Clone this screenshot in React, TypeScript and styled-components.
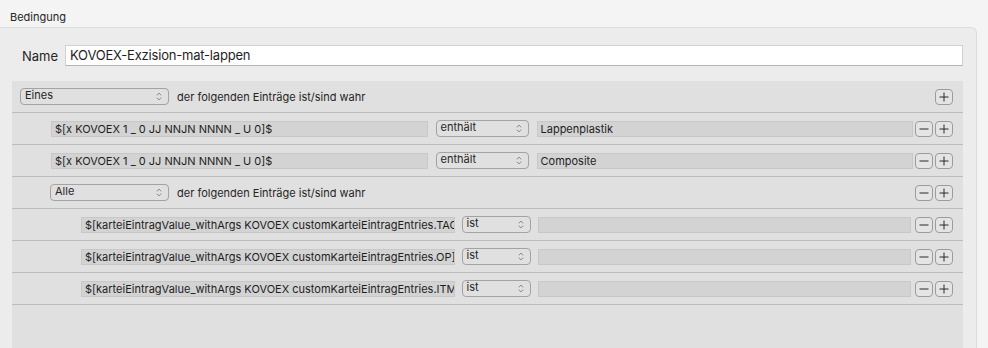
import React from "react";
import styled, { createGlobalStyle } from "styled-components";

const Global = createGlobalStyle`
  html, body {
    margin: 0;
    padding: 0;
    background: #f4f4f4;
    overflow: hidden;
  }
  body {
    font-family: Inter, "Liberation Sans", Arial, sans-serif;
    color: #262626;
    -webkit-font-smoothing: antialiased;
  }
`;

const Page = styled.div`
  width: 988px;
  height: 348px;
  overflow: hidden;
`;

const Title = styled.div`
  padding: 10px 0 0 10px;
  height: 14px;
  font-size: 11px;
  line-height: 14px;
  color: #262626;
`;

const Panel = styled.div`
  margin-top: 3px;
  width: 976px;
  height: 400px;
  background: #ececec;
  border-top: 1px solid #dcdcdc;
  border-right: 1px solid #dcdcdc;
  border-top-right-radius: 6px;
  padding-top: 17px;
`;

const NameRow = styled.div`
  display: flex;
  align-items: center;
  height: 21px;
`;

const NameLabel = styled.label`
  width: 43px;
  padding-left: 22px;
  font-size: 13px;
  color: #262626;
`;

const NameInput = styled.div`
  box-sizing: border-box;
  width: 898px;
  height: 21px;
  background: #ffffff;
  border: 1px solid #d0d0d0;
  border-bottom-color: #b4b4b4;
  font-size: 13px;
  letter-spacing: -0.2px;
  line-height: 19px;
  padding-left: 4px;
  color: #1e1e1e;
`;

const List = styled.div`
  margin: 15px 0 0 12px;
  width: 951px;
  height: 320px;
  background: #e0e0e0;
`;

const Row = styled.div<{ $indent: number }>`
  box-sizing: border-box;
  display: flex;
  align-items: center;
  height: 32px;
  padding-left: ${(p) => p.$indent}px;
  padding-right: 10px;
  border-bottom: 1px solid #bdbdbd;
`;

const PopUpBox = styled.div<{ $w: number; $gap: number }>`
  box-sizing: border-box;
  flex: none;
  position: relative;
  width: ${(p) => p.$w}px;
  height: 17px;
  margin: 0 ${(p) => p.$gap}px;
  border: 1px solid #a3a3a3;
  border-radius: 4px;
  font-size: 11px;
  line-height: 13px;
  padding-left: 4px;
  color: #262626;
`;

const Chevrons = styled.svg`
  position: absolute;
  right: 6px;
  top: 3px;
`;

const PopUp = ({ label, w, gap = 0 }: { label: string; w: number; gap?: number }) => (
  <PopUpBox $w={w} $gap={gap}>
    {label}
    <Chevrons width="6" height="9" viewBox="0 0 6 9">
      <path d="M0.8 3.3 L3 1.1 L5.2 3.3 M0.8 5.7 L3 7.9 L5.2 5.7" fill="none" stroke="#7a7a7a" strokeWidth="0.9" />
    </Chevrons>
  </PopUpBox>
);

const GroupLabel = styled.span`
  flex: 1;
  margin-left: 8px;
  font-size: 11px;
  color: #262626;
`;

const Field = styled.div<{ $mr?: number }>`
  box-sizing: border-box;
  flex: 1 1 0;
  min-width: 0;
  height: 16px;
  margin-right: ${(p) => p.$mr ?? 0}px;
  background: #d3d3d3;
  border: 1px solid #c8c8c8;
  font-size: 11px;
  line-height: 14px;
  padding-left: 3px;
  white-space: nowrap;
  overflow: hidden;
  text-overflow: clip;
  color: #1e1e1e;
`;

const Buttons = styled.div`
  display: flex;
  gap: 2px;
  flex: none;
`;

const SquareButton = styled.button`
  box-sizing: border-box;
  width: 18px;
  height: 16px;
  padding: 0;
  display: flex;
  align-items: center;
  justify-content: center;
  background: #e4e4e4;
  border: 1px solid #9c9c9c;
  border-radius: 4px;
`;

const Plus = () => (
  <SquareButton>
    <svg width="10" height="10" viewBox="0 0 10 10">
      <path d="M5 0.5 V9.5 M0.5 5 H9.5" stroke="#2a2a2a" strokeWidth="1" fill="none" />
    </svg>
  </SquareButton>
);

const Minus = () => (
  <SquareButton>
    <svg width="10" height="10" viewBox="0 0 10 10">
      <path d="M0.5 5 H9.5" stroke="#2a2a2a" strokeWidth="1" fill="none" />
    </svg>
  </SquareButton>
);

type RowData =
  | { kind: "group"; indent: number; op: string; w: number; minus: boolean }
  | { kind: "cond"; indent: number; field: string; op: string; w: number; gap: number; value: string; mr: number };

const rows: RowData[] = [
  { kind: "group", indent: 8, op: "Eines", w: 149, minus: false },
  { kind: "cond", indent: 39, field: "$[x KOVOEX 1 _ 0 JJ NNJN NNNN _ U 0]$", op: "enthält", w: 93, gap: 8, value: "Lappenplastik", mr: 2 },
  { kind: "cond", indent: 39, field: "$[x KOVOEX 1 _ 0 JJ NNJN NNNN _ U 0]$", op: "enthält", w: 93, gap: 8, value: "Composite", mr: 2 },
  { kind: "group", indent: 38, op: "Alle", w: 119, minus: true },
  { kind: "cond", indent: 69, field: "$[karteiEintragValue_withArgs KOVOEX customKarteiEintragEntries.TAG]$", op: "ist", w: 69, gap: 7, value: "", mr: 4 },
  { kind: "cond", indent: 69, field: "$[karteiEintragValue_withArgs KOVOEX customKarteiEintragEntries.OP]$", op: "ist", w: 69, gap: 7, value: "", mr: 4 },
  { kind: "cond", indent: 69, field: "$[karteiEintragValue_withArgs KOVOEX customKarteiEintragEntries.ITM]$", op: "ist", w: 69, gap: 7, value: "", mr: 4 },
];

export default function App() {
  return (
    <Page>
      <Global />
      <Title>Bedingung</Title>
      <Panel>
        <NameRow>
          <NameLabel>Name</NameLabel>
          <NameInput>KOVOEX-Exzision-mat-lappen</NameInput>
        </NameRow>
        <List>
          {rows.map((r, i) =>
            r.kind === "group" ? (
              <Row key={i} $indent={r.indent}>
                <PopUp label={r.op} w={r.w} />
                <GroupLabel>der folgenden Einträge ist/sind wahr</GroupLabel>
                <Buttons>
                  {r.minus && <Minus />}
                  <Plus />
                </Buttons>
              </Row>
            ) : (
              <Row key={i} $indent={r.indent}>
                <Field>{r.field}</Field>
                <PopUp label={r.op} w={r.w} gap={r.gap} />
                <Field $mr={r.mr}>{r.value}</Field>
                <Buttons>
                  <Minus />
                  <Plus />
                </Buttons>
              </Row>
            )
          )}
        </List>
      </Panel>
    </Page>
  );
}
